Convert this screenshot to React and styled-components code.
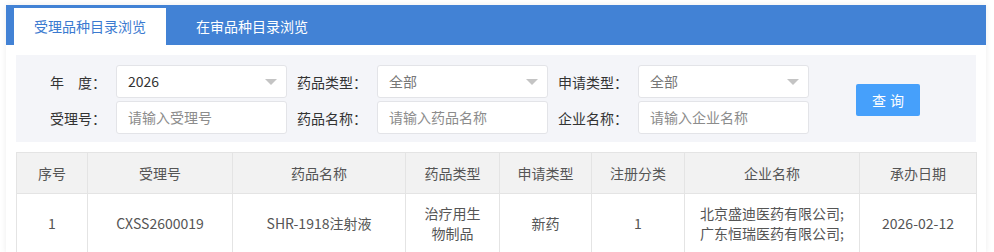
import React from "react";
import styled, { createGlobalStyle } from "styled-components";

const GlobalStyle = createGlobalStyle`
  body {
    margin: 0;
    background: #fff;
    font-family: "Microsoft YaHei", "Noto Sans CJK SC", sans-serif;
    font-size: 14px;
    color: #333;
  }
`;

const Page = styled.div`
  padding: 5px 8px 0 6px;
`;

const Panel = styled.div`
  background: #fff;
  box-shadow: 0 0 6px rgba(0, 0, 0, 0.08);
`;

const TabBar = styled.div`
  display: flex;
  align-items: flex-end;
  height: 40px;
  padding-left: 8px;
  background: #4282d5;
`;

const Tab = styled.div`
  height: 37px;
  line-height: 37px;
  padding: 0 20px;
  margin-right: 10px;
  color: ${(p) => (p.active ? "#3b7ad0" : "#fff")};
  background: ${(p) => (p.active ? "#fff" : "transparent")};
  cursor: pointer;
`;

const Body = styled.div`
  padding: 10px 10px 0;
`;

const Filter = styled.div`
  display: grid;
  grid-template-columns: 100px 171px 90px 171px 90px 171px auto;
  grid-template-rows: 33px 33px;
  row-gap: 3px;
  align-items: center;
  padding: 10px 0 8px;
  background: #f4f5f9;
`;

const Label = styled.label`
  text-align: right;
  padding-right: 10px;
  color: #333;
  white-space: pre;
`;

const tones = { value: "#333", option: "#777", hint: "#8c8c8c" };

const Field = styled.div`
  position: relative;
  box-sizing: border-box;
  height: 33px;
  line-height: 31px;
  padding: 0 11px;
  background: #fff;
  border: 1px solid #e3e4e8;
  border-radius: 3px;
  color: ${(p) => tones[p.tone || "value"]};
  ${(p) =>
    p.select &&
    `
    &::after {
      content: "";
      position: absolute;
      right: 9px;
      top: 13px;
      border-left: 6px solid transparent;
      border-right: 6px solid transparent;
      border-top: 6px solid #c4c4c4;
    }
  `}
`;

const Action = styled.div`
  grid-column: 7;
  grid-row: 1 / span 2;
  padding-left: 47px;
`;

const Button = styled.button`
  width: 64px;
  height: 32px;
  border: none;
  border-radius: 2px;
  background: #46a0fb;
  color: #fff;
  font-family: inherit;
  font-size: 14px;
  letter-spacing: 4px;
  text-indent: 4px;
`;

const Table = styled.table`
  width: 100%;
  margin-top: 10px;
  border-collapse: collapse;
  table-layout: fixed;
  color: #555;
`;

const Th = styled.th`
  height: 40px;
  padding: 0;
  background: #f2f2f2;
  border: 1px solid #e4e4e4;
  font-weight: normal;
  color: #555;
`;

const Td = styled.td`
  height: 58px;
  padding: 0 15px;
  border: 1px solid #e4e4e4;
  text-align: center;
  line-height: 20px;
`;

const columns = [
  ["序号", 71],
  ["受理号", 145],
  ["药品名称", 173],
  ["药品类型", 94],
  ["申请类型", 92],
  ["注册分类", 93],
  ["企业名称", 175],
  ["承办日期", 117],
];

export default function App() {
  return (
    <Page>
      <GlobalStyle />
      <Panel>
        <TabBar>
          <Tab active>受理品种目录浏览</Tab>
          <Tab>在审品种目录浏览</Tab>
        </TabBar>
        <Body>
          <Filter>
            <Label>年　度：</Label>
            <Field select>2026</Field>
            <Label>药品类型：</Label>
            <Field select tone="option">全部</Field>
            <Label>申请类型：</Label>
            <Field select tone="option">全部</Field>
            <Action>
              <Button>查询</Button>
            </Action>
            <Label>受理号：</Label>
            <Field tone="hint">请输入受理号</Field>
            <Label>药品名称：</Label>
            <Field tone="hint">请输入药品名称</Field>
            <Label>企业名称：</Label>
            <Field tone="hint">请输入企业名称</Field>
          </Filter>
          <Table>
            <colgroup>
              {columns.map(([name, w]) => (
                <col key={name} style={{ width: w }} />
              ))}
            </colgroup>
            <thead>
              <tr>
                {columns.map(([name]) => (
                  <Th key={name}>{name}</Th>
                ))}
              </tr>
            </thead>
            <tbody>
              <tr>
                <Td>1</Td>
                <Td>CXSS2600019</Td>
                <Td>SHR-1918注射液</Td>
                <Td>治疗用生物制品</Td>
                <Td>新药</Td>
                <Td>1</Td>
                <Td>
                  北京盛迪医药有限公司;
                  <br />
                  广东恒瑞医药有限公司;
                </Td>
                <Td>2026-02-12</Td>
              </tr>
            </tbody>
          </Table>
        </Body>
      </Panel>
    </Page>
  );
}
